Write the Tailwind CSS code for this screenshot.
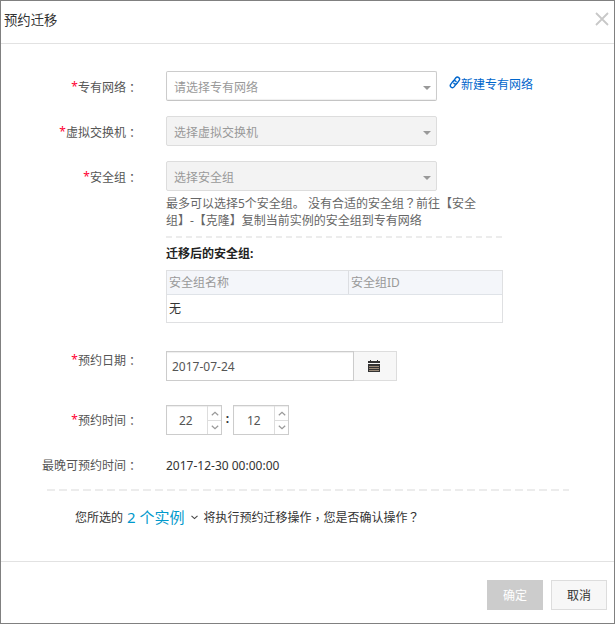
<!DOCTYPE html>
<html lang="zh-CN">
<head>
<meta charset="utf-8">
<title>预约迁移</title>
<script src="https://cdn.jsdelivr.net/npm/@tailwindcss/browser@4"></script>
</head>
<body class="bg-white">
<div class="flex flex-col w-[615px] h-[624px] border border-[#808080] font-['Noto_Sans','Noto_Sans_CJK_SC',sans-serif] text-[12px] leading-[18px] text-[#333] overflow-hidden">
  <header class="flex shrink-0 justify-between h-[43px] border-b border-[#e2e2e2] pl-[3px] pr-[5px]">
    <h1 class="text-[13.33px] leading-5 pt-[9px]">预约迁移</h1>
    <svg class="mt-[11px] w-[14px] h-[14px]" viewBox="0 0 14 14" fill="none" stroke="#c8c8c8" stroke-width="1.8"><path d="M1 1L13 13M13 1L1 13"/></svg>
  </header>

  <main class="flex flex-col h-[517px] shrink-0 pt-[27px]">
    <div class="flex h-[30px]">
      <div class="w-[137px] mr-[28px] pt-[8px] text-right text-[#555]"><span class="align-[1px] leading-none text-[#f03]">*</span>专有网络<span lang="zh-TW" class="align-[-1px] leading-none font-['Noto_Sans_CJK_TC']">：</span></div>
      <div class="flex items-center justify-between w-[271px] border border-[#ccc] border-b-[#c4c4c4] rounded-[2px] pl-[7px] pr-[5px] text-[#999] shadow-[inset_0_-1px_1px_#f0f0f0]"><span class="pt-[3px]">请选择专有网络</span><svg class="mt-[3px]" width="8" height="4" viewBox="0 0 8 4"><path d="M0 0h8L4 4z" fill="#999"/></svg></div>
      <a class="flex h-[18px] mt-[5px] ml-[12px] text-[#06c]"><svg width="12" height="13" viewBox="0 0 12 13" fill="none" stroke="#06c" stroke-width="1.4" stroke-linecap="round"><path d="M4.4 5.1L6.9 1.8C8.6 -.1 11.7 2.3 10.2 4.4L8 7.4C7.1 8.5 5.5 8.3 4.8 7.2"/><path d="M7.5 7.6L5 10.9C3.3 12.9 .2 10.5 1.7 8.4L3.9 5.4C4.8 4.3 6.4 4.5 7.1 5.6"/></svg>新建专有网络</a>
    </div>

    <div class="flex h-[30px] mt-[15px]">
      <div class="w-[137px] mr-[28px] pt-[8px] text-right text-[#555]"><span class="align-[1px] leading-none text-[#f03]">*</span>虚拟交换机<span lang="zh-TW" class="align-[-1px] leading-none font-['Noto_Sans_CJK_TC']">：</span></div>
      <div class="flex items-center justify-between w-[271px] border border-[#ddd] rounded-[2px] bg-[#f3f3f3] pl-[7px] pr-[5px] text-[#999]"><span class="pt-[3px]">选择虚拟交换机</span><svg class="mt-[3px]" width="8" height="4" viewBox="0 0 8 4"><path d="M0 0h8L4 4z" fill="#999"/></svg></div>
    </div>

    <div class="flex h-[162px] mt-[15px]">
      <div class="w-[137px] mr-[28px] pt-[8px] text-right text-[#555]"><span class="align-[1px] leading-none text-[#f03]">*</span>安全组<span lang="zh-TW" class="align-[-1px] leading-none font-['Noto_Sans_CJK_TC']">：</span></div>
      <div class="w-[337px]">
        <div class="flex h-[30px] items-center justify-between w-[271px] border border-[#ddd] rounded-[2px] bg-[#f3f3f3] pl-[7px] pr-[5px] text-[#999]"><span class="pt-[3px]">选择安全组</span><svg class="mt-[3px]" width="8" height="4" viewBox="0 0 8 4"><path d="M0 0h8L4 4z" fill="#999"/></svg></div>
        <p class="mt-[4px] h-[34px] leading-[17px] text-[#666] whitespace-nowrap">最多可以选择5个安全组。 没有合适的安全组<span lang="zh-TW" class="font-['Noto_Sans_CJK_TC'] leading-none">？</span>前往【安全<br>组】-【克隆】复制当前实例的安全组到专有网络</p>
        <div class="mt-[7px] h-[2px] bg-[repeating-linear-gradient(90deg,#ececec_0_6px,transparent_6px_10px)]"></div>
        <h2 class="h-[18px] mt-[7px] font-bold text-[#222]">迁移后的安全组:</h2>
        <div class="mt-[7px] h-[53px] border border-[#dfe0e2]">
          <div class="flex h-[24px] border-b border-[#dfe3e8] bg-[#f4f6fa] text-[#999] leading-[24px]">
            <div class="w-[182px] border-r border-[#dcdee2] pl-[2px]">安全组名称</div>
            <div class="pl-[2px]">安全组ID</div>
          </div>
          <div class="pl-[2px] leading-[27px]">无</div>
        </div>
      </div>
    </div>

    <div class="flex h-[30px] mt-[28px]">
      <div class="w-[137px] mr-[28px] pt-px text-right text-[#555]"><span class="align-[1px] leading-none text-[#f03]">*</span>预约日期<span lang="zh-TW" class="align-[-1px] leading-none font-['Noto_Sans_CJK_TC']">：</span></div>
      <div class="w-[188px] border border-[#ccc] pl-[5px] pt-[6px] text-[#555] shadow-[inset_0_1px_1px_#eee]">2017-07-24</div>
      <div class="flex items-center justify-center w-[43px] border border-l-0 border-[#ddd] bg-[#f7f7f7]">
        <svg class="mr-[3px]" width="12" height="12" viewBox="0 0 12 12"><path fill="#333" d="M0 1h2V0h1v1h6V0h1v1h2v2H0zM0 4h12v8H0z"/><path stroke="#c9b299" stroke-width=".7" d="M1 6.5h10M1 8.5h10M1 10.5h10"/></svg>
      </div>
    </div>

    <div class="flex h-[30px] mt-[24px]">
      <div class="w-[137px] mr-[28px] pt-[7px] text-right text-[#555]"><span class="align-[1px] leading-none text-[#f03]">*</span>预约时间<span lang="zh-TW" class="align-[-1px] leading-none font-['Noto_Sans_CJK_TC']">：</span></div>
      <div class="flex w-[56px] border border-[#ccc] text-[#555] shadow-[inset_0_1px_1px_#eee]">
        <span class="w-[41px] pl-[12px] pt-[6px] border-r border-[#ddd]">22</span>
        <div class="flex flex-col w-[13px]">
          <div class="flex items-center justify-center h-[15px] border-b border-[#ddd]"><svg width="8" height="5" viewBox="0 0 8 5" fill="none" stroke="#999" stroke-width="1.2"><path d="M.8 4.2L4 1.2L7.2 4.2"/></svg></div>
          <div class="flex items-center justify-center h-[13px]"><svg width="8" height="5" viewBox="0 0 8 5" fill="none" stroke="#999" stroke-width="1.2"><path d="M.8 .8L4 3.8L7.2 .8"/></svg></div>
        </div>
      </div>
      <span class="w-[11px] text-center font-bold pt-[5px]">:</span>
      <div class="flex w-[56px] border border-[#ccc] text-[#555] shadow-[inset_0_1px_1px_#eee]">
        <span class="w-[41px] pl-[13px] pt-[6px] border-r border-[#ddd]">12</span>
        <div class="flex flex-col w-[13px]">
          <div class="flex items-center justify-center h-[15px] border-b border-[#ddd]"><svg width="8" height="5" viewBox="0 0 8 5" fill="none" stroke="#999" stroke-width="1.2"><path d="M.8 4.2L4 1.2L7.2 4.2"/></svg></div>
          <div class="flex items-center justify-center h-[13px]"><svg width="8" height="5" viewBox="0 0 8 5" fill="none" stroke="#999" stroke-width="1.2"><path d="M.8 .8L4 3.8L7.2 .8"/></svg></div>
        </div>
      </div>
    </div>

    <div class="flex h-[18px] mt-[21px]">
      <div class="w-[137px] mr-[28px] pt-px text-right text-[#555]">最晚可预约时间<span lang="zh-TW" class="align-[-1px] leading-none font-['Noto_Sans_CJK_TC']">：</span></div>
      <div class="pt-px">2017-12-30 00:00:00</div>
    </div>

    <div class="mt-[15px] ml-[46px] w-[522px] h-[2px] bg-[repeating-linear-gradient(90deg,#ececec_0_8px,transparent_8px_12px)]"></div>

    <div class="flex items-center h-[20px] mt-[16px] pl-[74px] whitespace-nowrap">
      <span class="pt-[2px]">您所选的</span>
      <span class="ml-[4px] text-[15px] text-[#09c]">2 个实例</span>
      <svg class="ml-[6px] mr-[6px]" width="7" height="5" viewBox="0 0 7 5" fill="none" stroke="#444" stroke-width="1.1"><path d="M.5 .8L3.5 3.6L6.5 .8"/></svg>
      <span class="pt-[2px]">将执行预约迁移操作<span lang="zh-TW" class="align-[-2px] leading-none font-['Noto_Sans_CJK_TC']">，</span>您是否确认操作<span lang="zh-TW" class="leading-none font-['Noto_Sans_CJK_TC']">？</span></span>
    </div>
  </main>

  <footer class="flex justify-end gap-2 flex-1 border-t border-[#e2e2e2] pt-[18px] pr-[7px]">
    <button class="w-[56px] h-[30px] pt-px bg-[#ccc] text-white">确定</button>
    <button class="w-[56px] h-[30px] pt-px bg-[#f7f7f7] border border-[#ddd]">取消</button>
  </footer>
</div>
</body>
</html>
